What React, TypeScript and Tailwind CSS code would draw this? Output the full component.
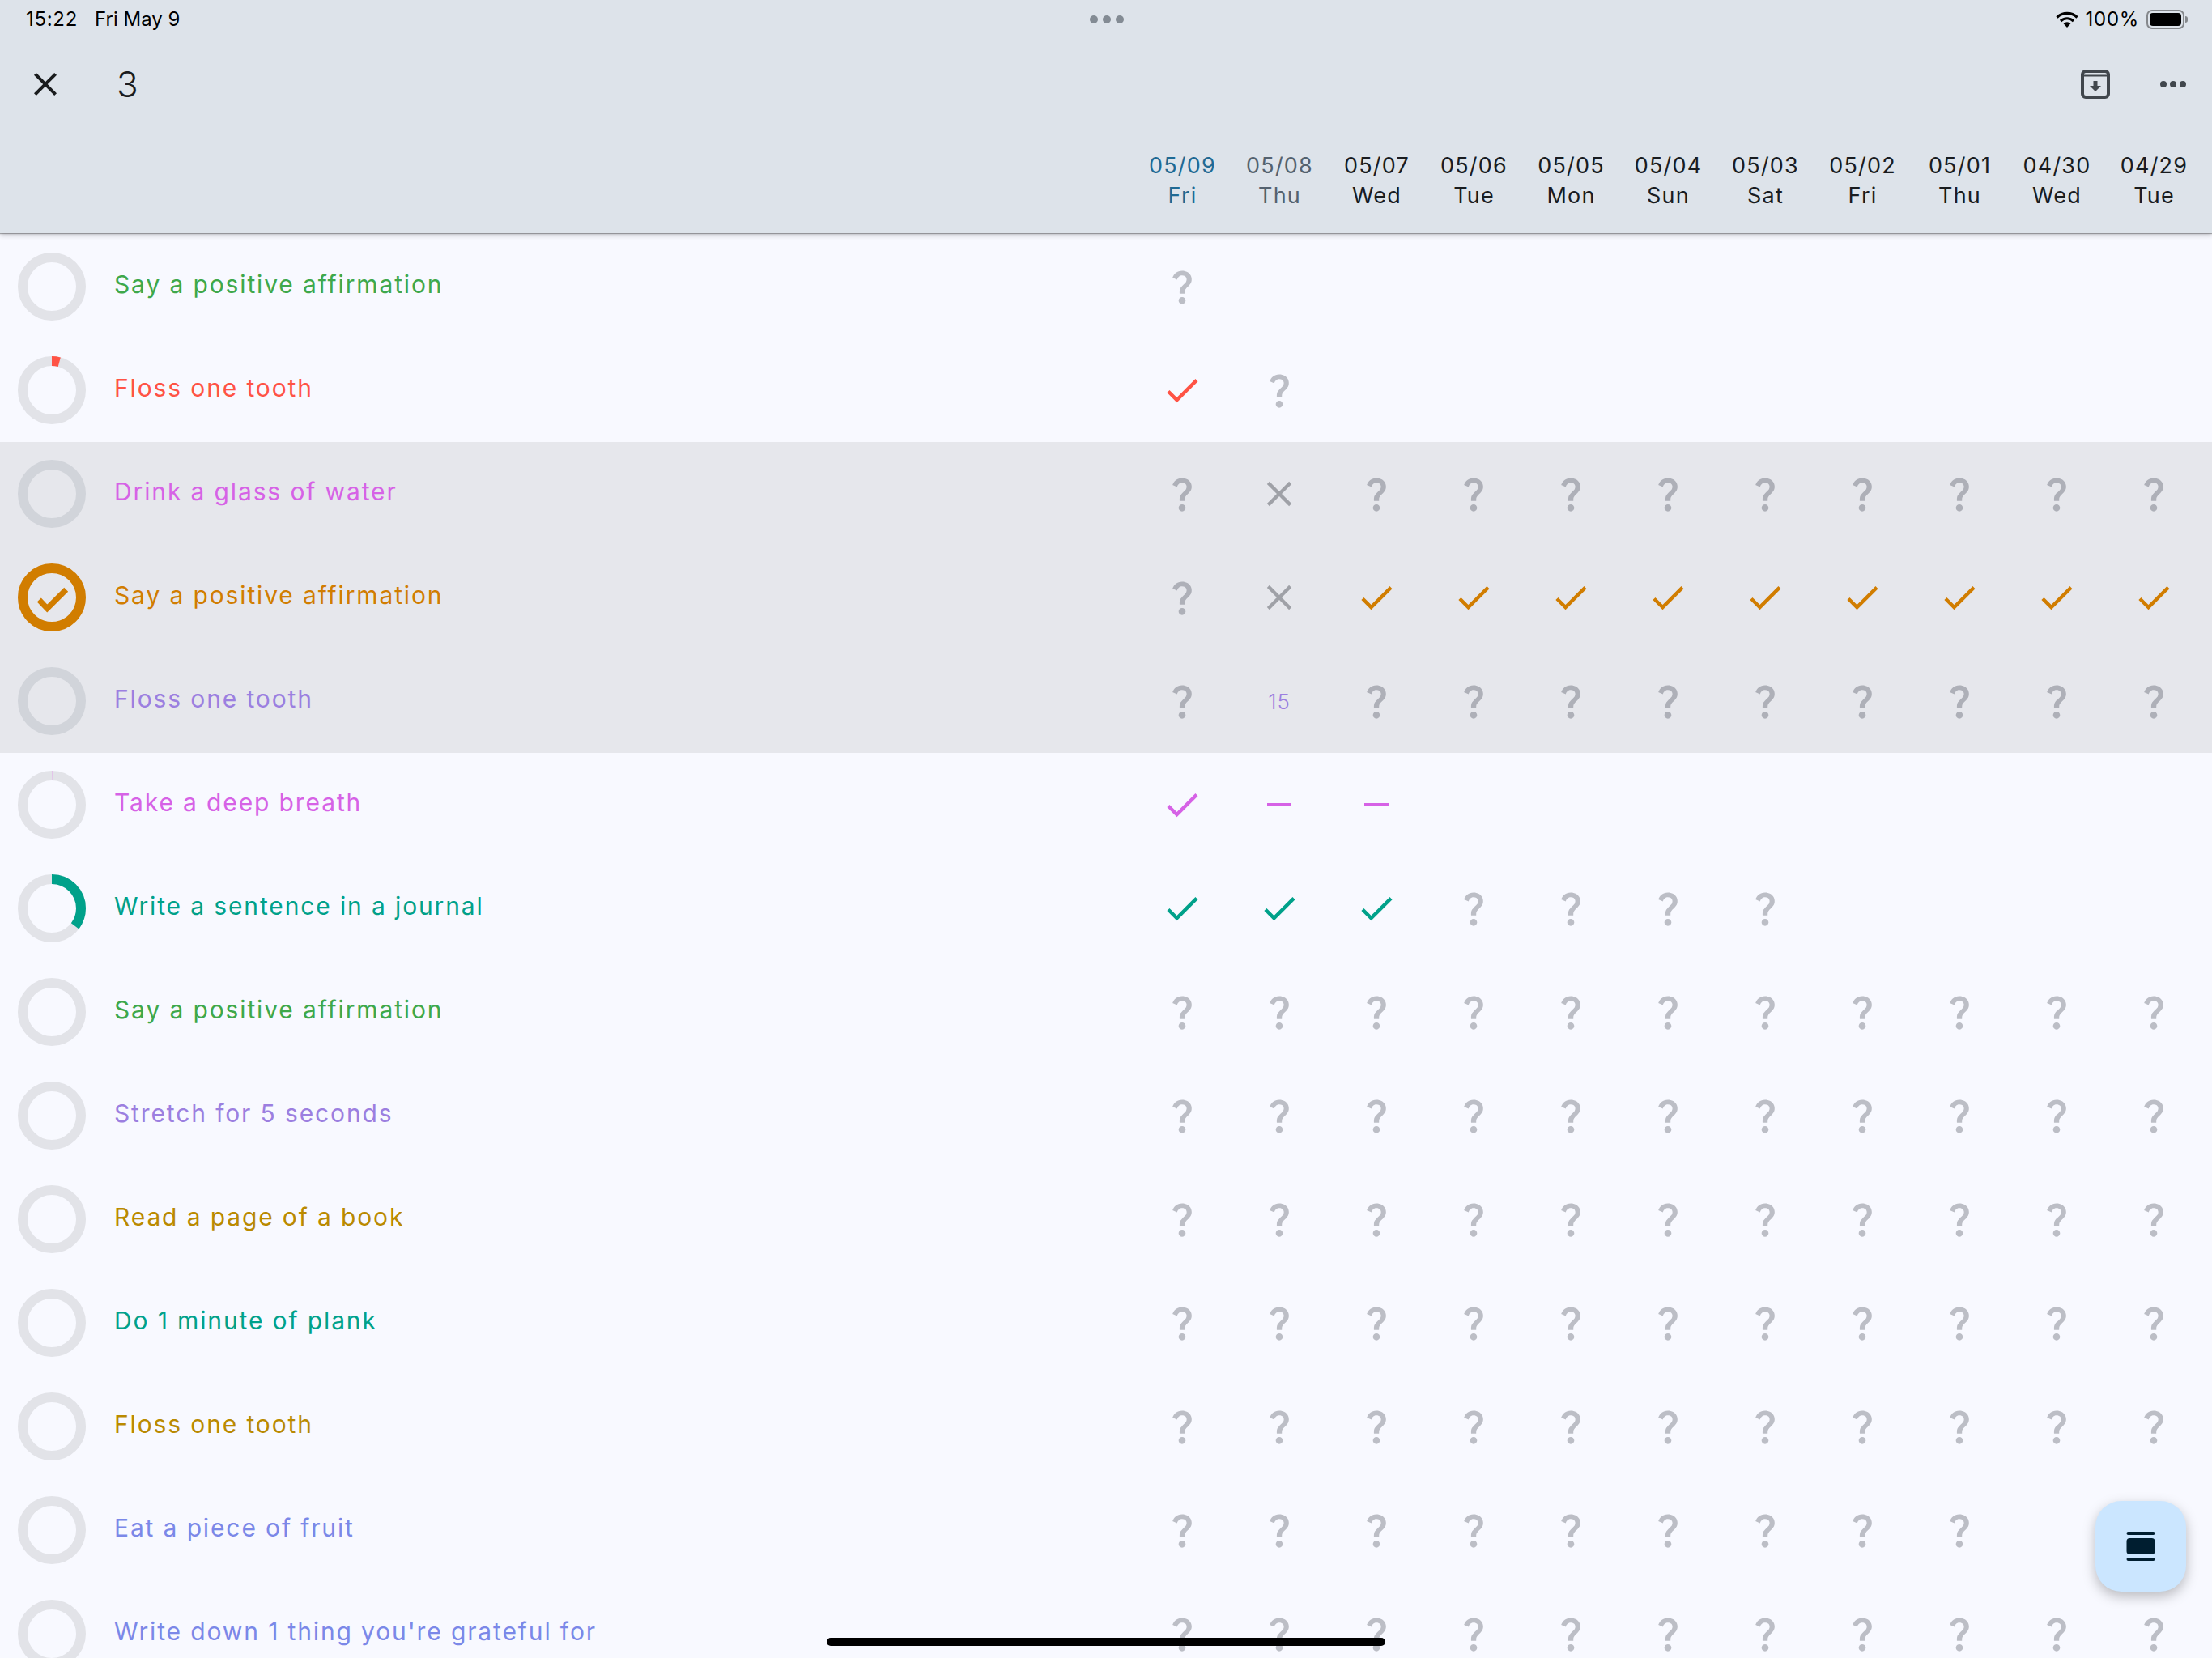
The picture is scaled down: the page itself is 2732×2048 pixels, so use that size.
import { MdCheck, MdClose, MdQuestionMark } from "react-icons/md";

type Habit = {
  name: string;
  color: string;
  check: string;
  ring?: string;
  progress?: number;
  done?: boolean;
  active?: boolean;
  cells: string;
};

const days = [
  ["05/09", "Fri", "text-[#1f6a94]"],
  ["05/08", "Thu", "text-[#54626f]"],
  ["05/07", "Wed", "text-[#191c1f]"],
  ["05/06", "Tue", "text-[#191c1f]"],
  ["05/05", "Mon", "text-[#191c1f]"],
  ["05/04", "Sun", "text-[#191c1f]"],
  ["05/03", "Sat", "text-[#191c1f]"],
  ["05/02", "Fri", "text-[#191c1f]"],
  ["05/01", "Thu", "text-[#191c1f]"],
  ["04/30", "Wed", "text-[#191c1f]"],
  ["04/29", "Tue", "text-[#191c1f]"],
];

const green = "text-[#3fa84a]";
const red = "text-[#ff5345]";
const magenta = "text-[#d662e6]";
const orange = "text-[#d17d00]";
const purple = "text-[#9c7fe0]";
const teal = "text-[#00a18a]";
const gold = "text-[#ba8a00]";
const blue = "text-[#7b88e8]";

// q = question, x = failed, c = check, d = dash, n = number, . = empty
const habits: Habit[] = [
  { name: "Say a positive affirmation", color: green, check: green, cells: "q" },
  { name: "Floss one tooth", color: red, check: red, ring: "#ff5345", progress: 15, cells: "cq" },
  { name: "Drink a glass of water", color: magenta, check: magenta, active: true, cells: "qxqqqqqqqqq" },
  { name: "Say a positive affirmation", color: orange, check: orange, active: true, done: true, cells: "qxccccccccc" },
  { name: "Floss one tooth", color: purple, check: purple, active: true, cells: "qnqqqqqqqqq" },
  { name: "Take a deep breath", color: magenta, check: magenta, ring: "#e3b4ea", progress: 1, cells: "cdd" },
  { name: "Write a sentence in a journal", color: teal, check: teal, ring: "#00a18a", progress: 127, cells: "cccqqqq" },
  { name: "Say a positive affirmation", color: green, check: green, cells: "qqqqqqqqqqq" },
  { name: "Stretch for 5 seconds", color: purple, check: purple, cells: "qqqqqqqqqqq" },
  { name: "Read a page of a book", color: gold, check: gold, cells: "qqqqqqqqqqq" },
  { name: "Do 1 minute of plank", color: teal, check: teal, cells: "qqqqqqqqqqq" },
  { name: "Floss one tooth", color: gold, check: gold, cells: "qqqqqqqqqqq" },
  { name: "Eat a piece of fruit", color: blue, check: blue, cells: "qqqqqqqqq" },
  { name: "Write down 1 thing you're grateful for", color: blue, check: blue, cells: "qqqqqqqqqqq" },
];

const Ring = ({ habit }: { habit: Habit }) => {
  const track = habit.active ? "#d1d4da" : "#e2e3e8";
  const length = 2 * Math.PI * 36;
  return (
    <svg width="84" height="84" viewBox="0 0 84 84" fill="none" className="shrink-0">
      {habit.done ? (
        <>
          <circle cx="42" cy="42" r="36" stroke="#d17d00" strokeWidth="12" />
          <path d="M26.3 45 36.3 55.6 59.7 32.3" stroke="#d17d00" strokeWidth="7" />
        </>
      ) : (
        <>
          <circle cx="42" cy="42" r="36" stroke={track} strokeWidth="12" />
          {habit.progress ? (
            <circle
              cx="42"
              cy="42"
              r="36"
              stroke={habit.ring}
              strokeWidth="12"
              strokeDasharray={`${(habit.progress / 360) * length} ${length}`}
              transform="rotate(-90 42 42)"
            />
          ) : null}
        </>
      )}
    </svg>
  );
};

const Cell = ({ kind, habit }: { kind: string; habit: Habit }) => {
  if (kind === "q")
    return <MdQuestionMark size={52} className={habit.active ? "text-[#aeb0b8]" : "text-[#bcbec6]"} />;
  if (kind === "x") return <MdClose size={52} className="text-[#9fa1a7]" />;
  if (kind === "c") return <MdCheck size={52} className={habit.check} />;
  if (kind === "d") return <div className="h-1 w-[30px] bg-[#d662e6]"></div>;
  if (kind === "n") return <span className={`text-[26px] font-light tracking-[0.8px] ${habit.check}`}>15</span>;
  return null;
};

const Row = ({ habit }: { habit: Habit }) => {
  return (
    <div className={`flex h-[128px] shrink-0 items-center pr-3 ${habit.active ? "bg-[#e6e7ec]" : ""}`}>
      <div className="flex w-[1400px] items-center pl-[22px]">
        <Ring habit={habit} />
        <span className={`ml-[35px] pb-1.5 text-[30px] font-[380] tracking-[1.87px] ${habit.color}`}>{habit.name}</span>
      </div>
      <div className="grid grid-cols-[repeat(11,120px)]">
        {Array.from({ length: 11 }).map((_, i) => (
          <div key={i} className="flex h-[128px] items-center justify-center">
            <Cell kind={habit.cells[i] ?? "."} habit={habit} />
          </div>
        ))}
      </div>
    </div>
  );
};

const App = () => {
  return (
    <div className="relative flex h-[2048px] flex-col overflow-hidden bg-[#f8f9ff] font-['Inter',sans-serif]">
      <div className="relative z-10 h-[288px] shrink-0 bg-[#dde3ea] shadow-[0_1px_1px_rgba(0,0,0,0.3),0_3px_6px_rgba(0,0,0,0.18)]">
        <div className="flex h-[48px] items-center justify-between pl-[32px] pr-[30px] text-[24px] text-black">
          <div className="flex w-[400px] gap-[21px]">
            <span className="tracking-[0.7px]">15:22</span>
            <span>Fri May 9</span>
          </div>
          <div className="flex gap-[6px]">
            <div className="h-[10px] w-[10px] rounded-full bg-[#838b94]"></div>
            <div className="h-[10px] w-[10px] rounded-full bg-[#838b94]"></div>
            <div className="h-[10px] w-[10px] rounded-full bg-[#838b94]"></div>
          </div>
          <div className="flex w-[400px] items-center justify-end gap-[9px]">
            <svg width="28" height="20" viewBox="0 0 28 20" fill="none">
              <path d="M1.5 7.5a18 18 0 0 1 25 0" stroke="black" strokeWidth="3.2" />
              <path d="M6 12a11.5 11.5 0 0 1 16 0" stroke="black" strokeWidth="3.2" />
              <path d="M9.5 15a6.5 6.5 0 0 1 9 0L14 20z" fill="black" />
            </svg>
            <span className="tracking-[0.7px]">100%</span>
            <div className="flex items-center">
              <div className="flex h-[24px] w-[47px] items-center justify-center rounded-[7px] border-2 border-[#85888c]">
                <div className="h-[16px] w-[39px] rounded-[4px] bg-black"></div>
              </div>
              <div className="ml-[1px] h-[8px] w-[3px] rounded-r-full bg-[#85888c]"></div>
            </div>
          </div>
        </div>
        <div className="flex h-[112px] items-center pl-[32px] pr-[32px]">
          <MdClose size={48} className="text-[#1a1c1e]" />
          <span className="ml-[64px] text-[44px] font-light text-[#1a1c1e]">3</span>
          <div className="ml-auto flex items-center gap-[62px]">
            <svg width="36" height="36" viewBox="0 0 36 36" fill="none">
              <path
                d="M6 2h24a4 4 0 0 1 4 4v24a4 4 0 0 1-4 4H6a4 4 0 0 1-4-4V6a4 4 0 0 1 4-4z"
                stroke="#41474d"
                strokeWidth="4"
              />
              <path d="M2 7.5h32" stroke="#41474d" strokeWidth="2" />
              <path d="M15.5 14h5v6h4.5L18 27l-7-7h4.5z" fill="#41474d" />
            </svg>
            <div className="flex gap-[4px]">
              <div className="h-[8px] w-[8px] rounded-full bg-[#41474d]"></div>
              <div className="h-[8px] w-[8px] rounded-full bg-[#41474d]"></div>
              <div className="h-[8px] w-[8px] rounded-full bg-[#41474d]"></div>
            </div>
          </div>
        </div>
        <div className="mt-[26px] grid grid-cols-[repeat(11,120px)] pl-[1400px]">
          {days.map(([date, day, color]) => (
            <div key={date} className={`flex flex-col items-center pl-[1px] text-[27px] leading-[37px] tracking-[1.2px] ${color}`}>
              <span>{date}</span>
              <span>{day}</span>
            </div>
          ))}
        </div>
      </div>
      <div className="mt-[2px] flex flex-col">
        {habits.map((habit, i) => (
          <Row key={i} habit={habit} />
        ))}
      </div>
      <button className="absolute bottom-[82px] right-[32px] z-20 flex h-[112px] w-[112px] items-center justify-center rounded-[32px] bg-[#cbe6ff] shadow-[0_6px_16px_rgba(0,0,0,0.26)]">
        <svg width="36" height="36" viewBox="0 0 36 36" fill="#001e30">
          <rect x="0.5" y="0" width="35" height="4" rx="2" />
          <rect x="0.5" y="8" width="35" height="20" rx="4" />
          <rect x="0.5" y="32" width="35" height="4" rx="2" />
        </svg>
      </button>
      <div className="absolute bottom-[15px] left-[1021px] z-20 h-[10px] w-[690px] rounded-full bg-black"></div>
    </div>
  );
};

export default App;
